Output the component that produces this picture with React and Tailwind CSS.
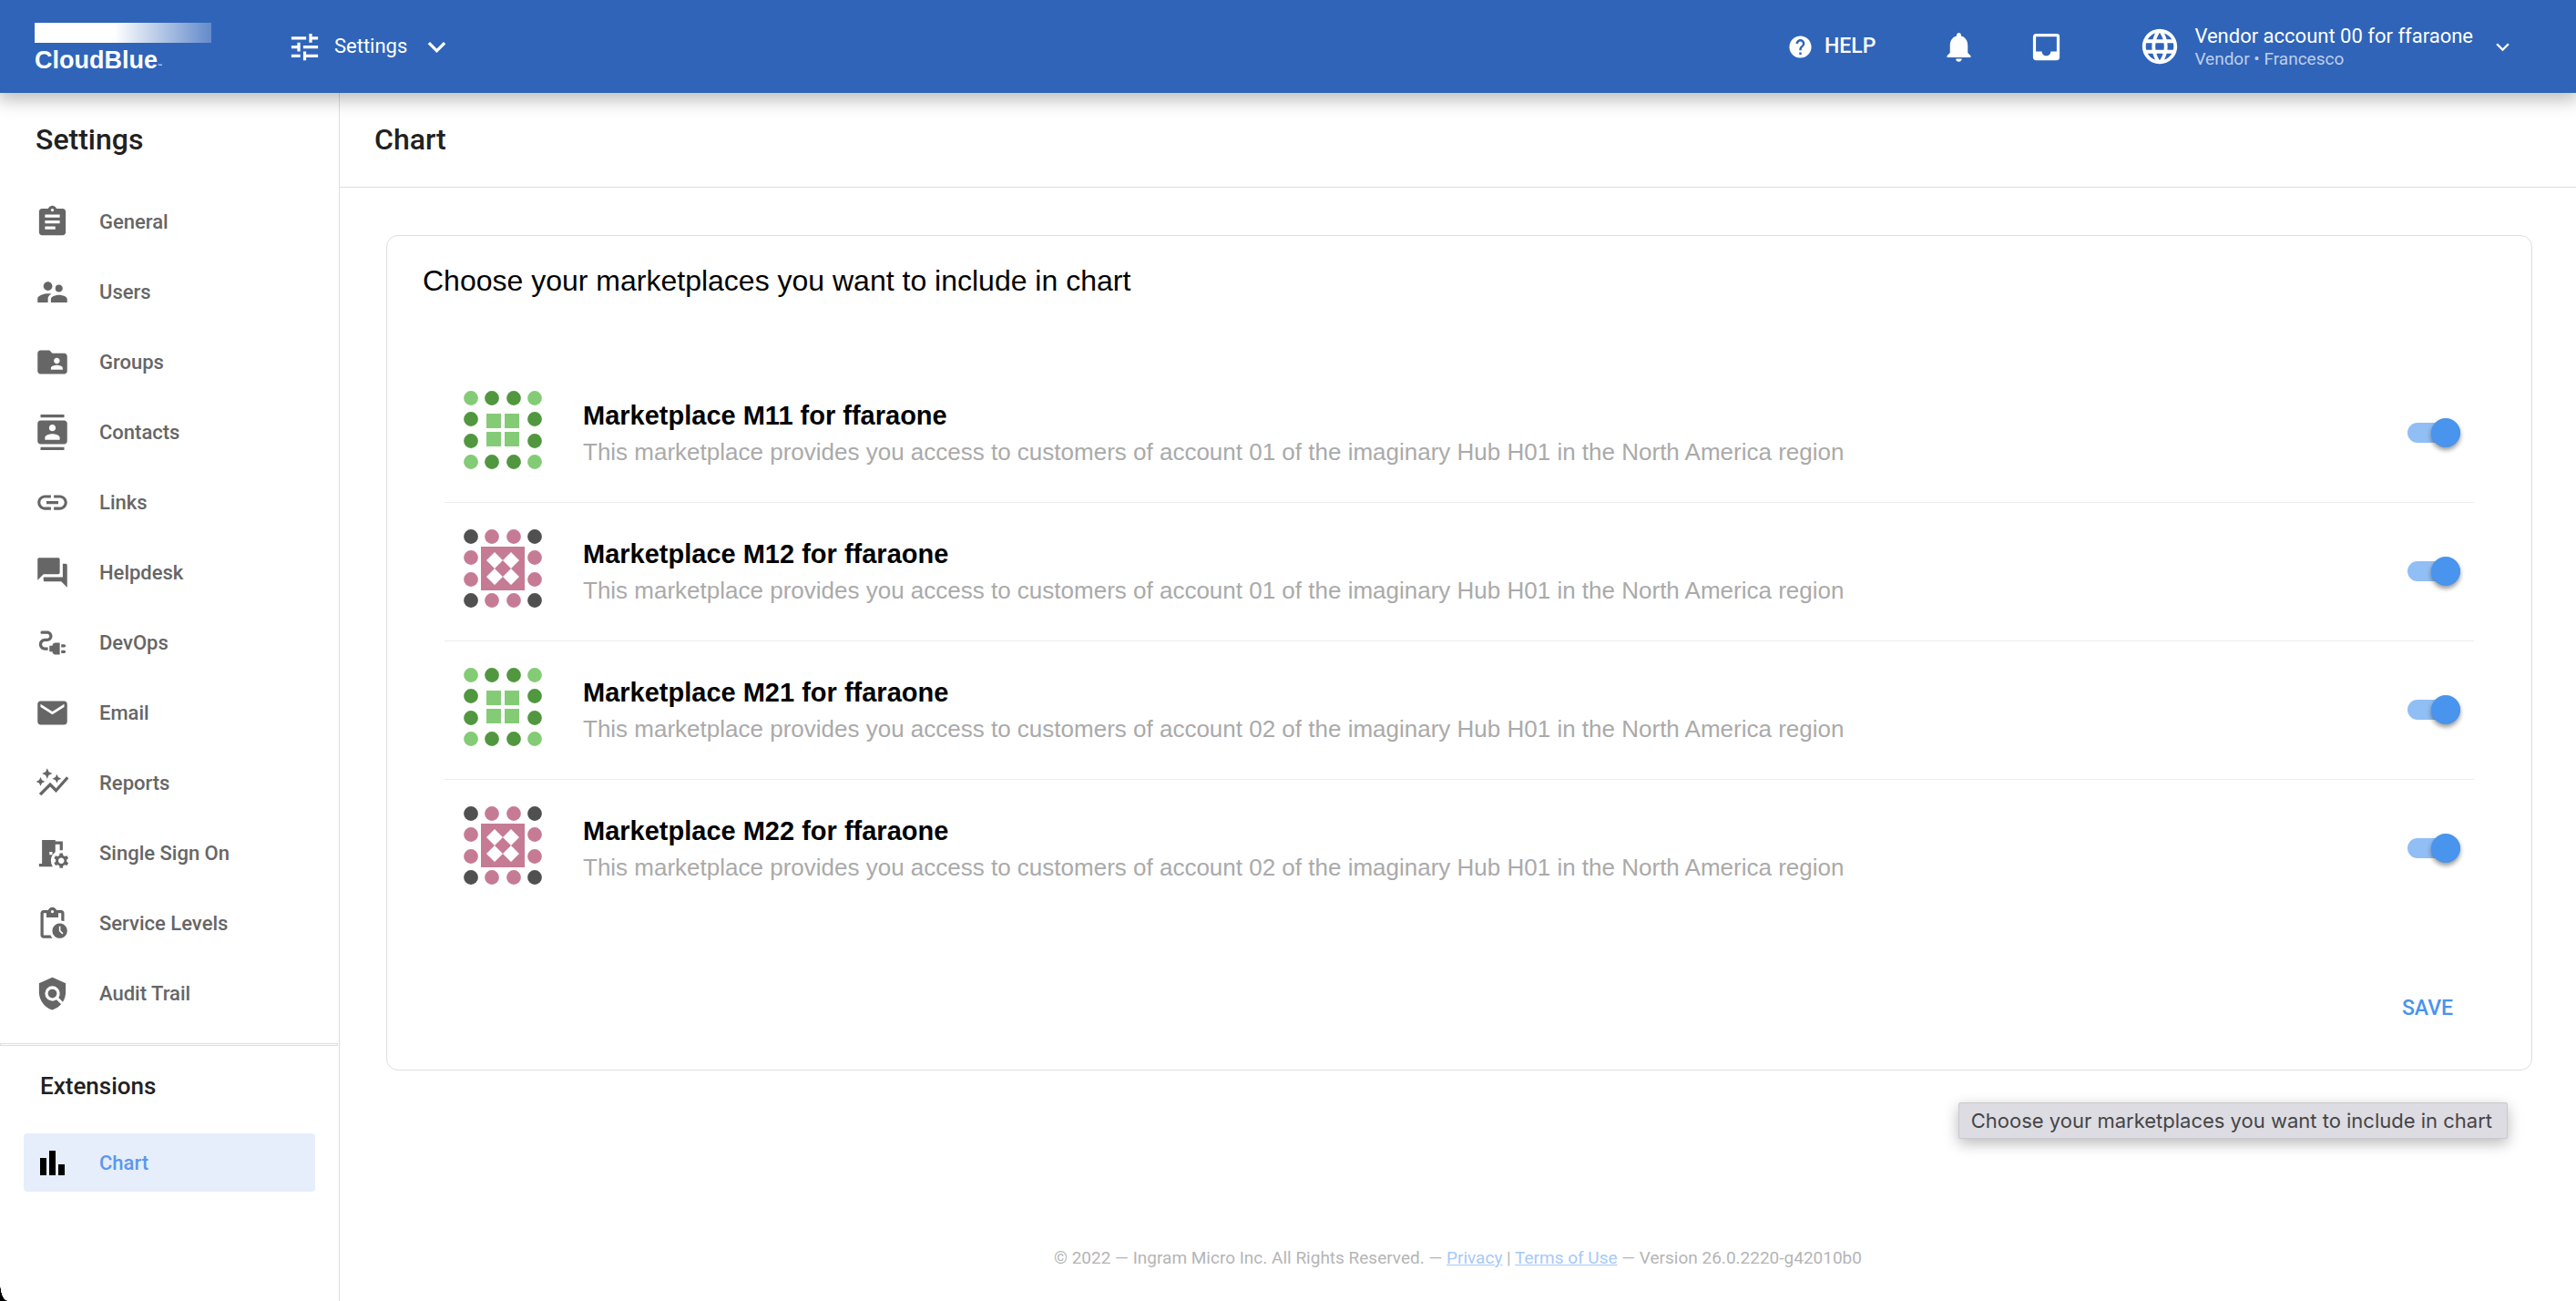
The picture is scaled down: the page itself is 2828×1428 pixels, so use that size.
import {
  MdAssignment,
  MdSupervisorAccount,
  MdFolderShared,
  MdContacts,
  MdLink,
  MdQuestionAnswer,
  MdElectricalServices,
  MdEmail,
  MdAutoGraph,
  MdRoomPreferences,
  MdPendingActions,
  MdPolicy,
  MdTune,
  MdExpandMore,
  MdHelp,
  MdNotifications,
  MdInbox,
  MdLanguage,
} from "react-icons/md";

const NAV = [
  ["General", MdAssignment],
  ["Users", MdSupervisorAccount],
  ["Groups", MdFolderShared],
  ["Contacts", MdContacts],
  ["Links", MdLink],
  ["Helpdesk", MdQuestionAnswer],
  ["DevOps", MdElectricalServices],
  ["Email", MdEmail],
  ["Reports", MdAutoGraph],
  ["Single Sign On", MdRoomPreferences],
  ["Service Levels", MdPendingActions],
  ["Audit Trail", MdPolicy],
];

const MARKETPLACES = [
  { id: "M11", account: "01", kind: "green" },
  { id: "M12", account: "01", kind: "pink" },
  { id: "M21", account: "02", kind: "green" },
  { id: "M22", account: "02", kind: "pink" },
];

const DOT_POSITIONS = [8, 31, 55, 78];

function MarketplaceIcon({ kind }) {
  const green = kind === "green";
  const corner = green ? "#84cb76" : "#505050";
  const side = green ? "#519740" : "#c67b95";
  const dots = [];
  DOT_POSITIONS.forEach((cy, row) =>
    DOT_POSITIONS.forEach((cx, col) => {
      const edgeRow = row === 0 || row === 3;
      const edgeCol = col === 0 || col === 3;
      if (edgeRow || edgeCol) {
        dots.push(
          <circle key={`${row}-${col}`} cx={cx} cy={cy} r="7.9" fill={edgeRow && edgeCol ? corner : side} />
        );
      }
    })
  );
  return (
    <svg viewBox="0 0 86 86" className="size-[86px] shrink-0" aria-hidden="true">
      {dots}
      {green ? (
        <path fill="#84cb76" d="M25 25h16v16H25zM45 25h16v16H45zM25 45h16v16H25zM45 45h16v16H45z" />
      ) : (
        <>
          <path fill="#c67b95" d="M19 19h48v48H19z" />
          <path
            fill="#fff"
            d="M34 25l9 9-9 9-9-9zM52 25l9 9-9 9-9-9zM34 43l9 9-9 9-9-9zM52 43l9 9-9 9-9-9z"
          />
        </>
      )}
    </svg>
  );
}

function ChartIcon() {
  return (
    <svg viewBox="0 0 39 39" className="size-[39px] shrink-0 text-black" fill="currentColor" aria-hidden="true">
      <path d="M6 14h7v19H6zM16 6h7v27h-7zM26 21h7v12h-7z" />
    </svg>
  );
}

function Header() {
  return (
    <header className="relative z-10 flex h-[102px] items-center bg-[#2f64b9] pr-[66px] pl-[38px] text-white shadow-[0_6px_18px_2px_rgba(0,0,0,0.26)]">
      <a href="#home" className="flex w-[194px] flex-col gap-[6px] pt-[2px]" aria-label="CloudBlue">
        <span className="h-[22px] bg-linear-to-r from-white from-45% to-white/25" />
        <span className="flex items-end font-['Liberation_Sans',sans-serif] text-[27px] leading-[26px] font-bold">
          CloudBlue<span className="text-[5px] leading-[14px]">™</span>
        </span>
      </a>
      <button type="button" className="ml-[83px] flex items-center text-[22px] leading-[30px]">
        <MdTune className="mr-[13px] size-[39px]" />
        Settings
        <MdExpandMore className="ml-[13px] size-[39px]" />
      </button>
      <div className="ml-auto flex items-center">
        <button type="button" className="flex items-center gap-3 text-[23px] leading-[30px] font-medium">
          <MdHelp className="size-[29px]" />
          HELP
        </button>
        <button type="button" aria-label="Notifications" className="ml-[72px]">
          <MdNotifications className="size-[39px]" />
        </button>
        <button type="button" aria-label="Inbox" className="ml-[57px]">
          <MdInbox className="size-[39px]" />
        </button>
        <button type="button" className="ml-[82px] flex items-center text-left">
          <MdLanguage className="mr-[15px] size-[46px]" />
          <span className="flex flex-col">
            <span className="text-[22px] leading-[27px]">Vendor account 00 for ffaraone</span>
            <span className="text-[19px] leading-[24px] text-white/70">Vendor • Francesco</span>
          </span>
          <MdExpandMore className="ml-[18px] size-[29px]" />
        </button>
      </div>
    </header>
  );
}

function NavItem({ label, icon, active }) {
  return (
    <a
      href={`#${label.toLowerCase().replaceAll(" ", "-")}`}
      aria-current={active ? "page" : undefined}
      className={
        active
          ? "mx-[26px] flex h-16 items-center gap-8 rounded bg-[#e6eefb] pl-3 text-[22px] font-medium text-[#5a97ee]"
          : "mx-[26px] flex h-[77px] items-center gap-8 pl-3 text-[22px] font-medium text-[#666]"
      }
    >
      {icon}
      {label}
    </a>
  );
}

function Sidebar() {
  return (
    <aside className="w-[373px] shrink-0 border-r border-[#dedede]">
      <h2 className="px-[39px] pt-[30px] text-[32px] leading-[42px] font-medium text-[#212121]">Settings</h2>
      <nav aria-label="Settings" className="mt-[31px]">
        {NAV.map(([label, Icon]) => (
          <NavItem key={label} label={label} icon={<Icon className="size-[39px] shrink-0" />} />
        ))}
      </nav>
      <hr className="mt-4 mr-px h-[3px] border border-[#dedede]" />
      <h3 className="mt-[27px] px-[44px] text-[26px] leading-[34px] font-medium text-[#212121]">Extensions</h3>
      <nav aria-label="Extensions" className="mt-[35px]">
        <NavItem label="Chart" icon={<ChartIcon />} active />
      </nav>
    </aside>
  );
}

function MarketplaceRow({ id, account, kind }) {
  return (
    <li className="flex h-[152px] items-center border-b border-[#ececec] pr-[15px] pb-2 pl-[21px] last:border-b-0">
      <MarketplaceIcon kind={kind} />
      <label htmlFor={`toggle-${id}`} className="ml-[45px] flex-1 pt-2">
        <span className="block text-[29px] leading-[40px] font-bold text-black">Marketplace {id} for ffaraone</span>
        <span className="block text-[26px] leading-[40px] text-[#aaa]">
          This marketplace provides you access to customers of account {account} of the imaginary Hub H01 in the North
          America region
        </span>
      </label>
      <input
        id={`toggle-${id}`}
        type="checkbox"
        role="switch"
        defaultChecked
        className="mt-[6px] flex h-[22px] w-[58px] appearance-none items-center rounded-full bg-[#bdbdbd] before:size-8 before:shrink-0 before:rounded-full before:bg-white before:shadow-[0_3px_5px_rgba(0,0,0,0.4)] checked:justify-end checked:bg-[#91bef5] checked:before:bg-[#4994ec]"
      />
    </li>
  );
}

export default function App() {
  return (
    <div className="relative flex min-h-screen flex-col bg-white font-[Roboto,sans-serif]">
      <Header />
      <div className="flex flex-1">
        <Sidebar />
        <main className="flex min-w-0 flex-1 flex-col">
          <div className="border-b border-[#dedede] px-[38px] pt-[30px] pb-[31px]">
            <h1 className="text-[32px] leading-[42px] font-medium text-[#212121]">Chart</h1>
          </div>
          <section className="relative mx-[48px] mt-[52px] ml-[51px] rounded-[13px] border border-[#dedede] pt-[28px] pb-[37px] font-['Liberation_Sans',sans-serif]">
            <h2 className="px-[39px] text-[32px] leading-[42px] text-black">
              Choose your marketplaces you want to include in chart
            </h2>
            <ul className="mx-[63px] mt-[71px]">
              {MARKETPLACES.map((m) => (
                <MarketplaceRow key={m.id} {...m} />
              ))}
            </ul>
            <div className="mt-[70px] flex justify-end pr-[74px] font-[Roboto,sans-serif]">
              <button
                type="button"
                title="Choose your marketplaces you want to include in chart"
                className="h-[59px] px-3 text-[23px] font-medium text-[#4994ec]"
              >
                SAVE
              </button>
            </div>
            <div
              role="tooltip"
              className="absolute top-full right-[26px] mt-9 rounded-xs border border-[#c9c9ce] bg-[#dddce3] py-1 pr-4 pl-[13px] font-[Inter,sans-serif] text-[22px] leading-[30px] whitespace-nowrap text-[#454545] shadow-[0_5px_16px_rgba(0,0,0,0.28)]"
            >
              Choose your marketplaces you want to include in chart
            </div>
          </section>
          <footer className="mt-auto pb-[33px] text-center text-[19px] leading-[28px] text-[#b5b5b5]">
            © 2022 — Ingram Micro Inc. All Rights Reserved. —{" "}
            <a href="#privacy" className="text-[#a6c9f8] underline">
              Privacy
            </a>{" "}
            |{" "}
            <a href="#terms" className="text-[#a6c9f8] underline">
              Terms of Use
            </a>{" "}
            — Version 26.0.2220-g42010b0
          </footer>
        </main>
      </div>
      <div className="pointer-events-none absolute bottom-0 left-0 h-5 w-2 bg-[radial-gradient(ellipse_8px_20px_at_100%_0,transparent_96%,black)]" />
    </div>
  );
}
